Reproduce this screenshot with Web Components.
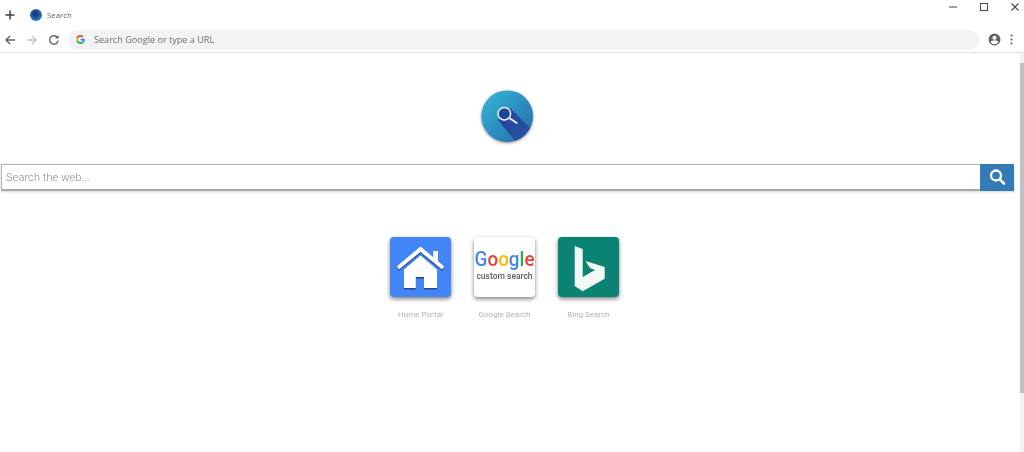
<!DOCTYPE html>
<html><head><meta charset="utf-8"><style>
html,body{margin:0;height:100%;background:#fff;overflow:hidden}
body{width:1024px;height:452px;font-family:"Open Sans","Liberation Sans",sans-serif}
</style></head><body>
<browser-frame>
<tool-bar></tool-bar>
<page-view>
<search-logo></search-logo>
<search-box></search-box>
<tile-row>
<app-tile label="Home Portal" kind="home"></app-tile>
<app-tile label="Google Search" kind="google"></app-tile>
<app-tile label="Bing Search" kind="bing"></app-tile>
</tile-row>
</page-view>
</browser-frame>
<script>
function def(name, html){
  customElements.define(name, class extends HTMLElement{
    constructor(){super();this.attachShadow({mode:'open'}).innerHTML=typeof html==='function'?html(this):html;}
  });
}
def('browser-frame',`<style>:host{display:flex;flex-direction:column;width:1024px;height:452px;background:#fff;filter:blur(.35px)}</style><slot></slot>`);
def('tool-bar',`<style>
:host{display:block;height:53px;box-sizing:border-box;border-bottom:1px solid #dfe1e3;font-family:"Open Sans","Liberation Sans",sans-serif;position:relative}
.tabs{display:flex;align-items:center;height:29px;padding-left:4px}
.tabs svg.plus{width:12px;height:12px}
.fav{width:12px;height:12px;border-radius:50%;margin-left:14px;background:radial-gradient(circle at 45% 42%,#1d3f86 0 22%,#2b74bf 62%,#57a8dc)}
.title{font-size:7.8px;color:#5f6368;margin-left:5px}
.win{display:flex;position:absolute;top:0;right:0}
.win svg{display:block}
.nav{display:flex;align-items:center;height:21px}
.ic{display:block}
.omni{margin-left:8px;width:911px;height:20px;border-radius:10px;background:#f1f3f4;display:flex;align-items:center;box-sizing:border-box;padding-left:8px}
.omni span{font-size:9.1px;color:#6a6d71;margin-left:9px}
</style>
<div class="tabs"><svg class="plus" viewBox="0 0 12 12"><path d="M6 1.5v9M1.5 6h9" stroke="#3c4043" stroke-width="1.5"/></svg><div class="fav"></div><div class="title">Search</div></div>
<div class="win"><svg width="114" height="14" viewBox="0 0 114 14"><path d="M39 7h8" stroke="#5f6368" stroke-width="1.2"/><rect x="70.5" y="3.5" width="7" height="7" fill="none" stroke="#4a4a4a" stroke-width="1.1"/><path d="M101.500 3.500l7 7M108.500 3.500l-7 7" stroke="#4a4a4a" stroke-width="1.1"/></svg></div>
<div class="nav">
<svg class="ic" style="margin-left:4px" width="12" height="12" viewBox="0 0 12 12"><path d="M11 6H2M6 2L2 6l4 4" fill="none" stroke="#5f6368" stroke-width="1.4"/></svg>
<svg class="ic" style="margin-left:10px" width="12" height="12" viewBox="0 0 12 12"><path d="M1 6h9M6 2l4 4-4 4" fill="none" stroke="#c2c4c6" stroke-width="1.4"/></svg>
<svg class="ic" style="margin-left:10px" width="12" height="12" viewBox="0 0 12 12"><path d="M10 6.5A4.2 4.2 0 1 1 8.8 3" fill="none" stroke="#5f6368" stroke-width="1.4"/><path d="M10.6 1v3.6H7z" fill="#5f6368"/></svg>
<div class="omni"><svg width="9" height="9" viewBox="0 0 48 48"><path fill="#EA4335" d="M24 9.5c3.5 0 6.700 1.200 9.200 3.600l6.900-6.900C35.900 2.400 30.400 0 24 0 14.600 0 6.500 5.400 2.600 13.200l8 6.200C12.400 13.700 17.700 9.500 24 9.500z"/><path fill="#4285F4" d="M46.900 24.500c0-1.600-.1-3.100-.4-4.500H24v9h12.900c-.6 3-2.200 5.500-4.800 7.200l7.700 6c4.500-4.200 7.100-10.300 7.100-17.700z"/><path fill="#FBBC05" d="M10.500 28.600c-.5-1.400-.8-3-.8-4.600s.3-3.200.8-4.600l-8-6.200C.9 16.500 0 20.100 0 24s.9 7.500 2.600 10.800l7.900-6.200z"/><path fill="#34A853" d="M24 48c6.500 0 11.900-2.100 15.900-5.800l-7.700-6c-2.200 1.400-4.900 2.300-8.200 2.300-6.300 0-11.600-4.200-13.500-9.900l-8 6.200C6.500 42.600 14.600 48 24 48z"/></svg><span>Search Google or type a URL</span></div>
<svg class="ic" style="margin-left:9px" width="13" height="13" viewBox="0 0 24 24"><path fill="#5f6368" d="M12 1a11 11 0 1 0 0 22 11 11 0 0 0 0-22zm0 4a3.800 3.800 0 1 1 0 7.600A3.800 3.800 0 0 1 12 5zm0 15.500c-2.900 0-5.400-1.400-7-3.600.1-2.300 4.700-3.600 7-3.600s6.900 1.300 7 3.600c-1.600 2.200-4.100 3.600-7 3.600z"/></svg>
<svg class="ic" style="margin-left:9px" width="3" height="11" viewBox="0 0 3 11"><circle cx="1.500" cy="1.500" r="1.100" fill="#5f6368"/><circle cx="1.500" cy="5.500" r="1.100" fill="#5f6368"/><circle cx="1.500" cy="9.500" r="1.100" fill="#5f6368"/></svg>
</div>`);
def('page-view',`<style>
:host{display:block;position:relative;height:399px;font-family:"Roboto","Open Sans",sans-serif;box-sizing:border-box;padding-top:37px}
.bar{position:absolute;top:0;right:0;width:4px;height:399px;background:#f1f1f1}
.th{position:absolute;top:10px;left:0;right:0;height:330px;background:#c1c1c1}
</style><slot></slot><div class="bar"><div class="th"></div></div>`);
def('search-logo',`<style>:host{display:block;width:52px;height:52px;margin-left:481px;position:relative}
svg{display:block;filter:drop-shadow(0 1px 1.500px rgba(0,0,0,.45))}</style>
<svg width="52" height="52" viewBox="0 0 52 52"><defs>
<linearGradient id="g" x1="0" y1="0" x2="1" y2="1"><stop offset="0" stop-color="#35b8d6"/><stop offset=".55" stop-color="#2a8cc0"/><stop offset="1" stop-color="#2a6aa8"/></linearGradient>
<linearGradient id="b" x1="0" y1="0" x2="1" y2="1"><stop offset="0" stop-color="#1f3f98"/><stop offset="1" stop-color="#2b58a6"/></linearGradient>
<clipPath id="c"><circle cx="26.200" cy="26.200" r="25.800"/></clipPath></defs>
<circle cx="26.200" cy="26.200" r="25.800" fill="url(#g)"/>
<path clip-path="url(#c)" d="M29 18L52 41 38 56 17 30z" fill="url(#b)"/>
<circle cx="23.300" cy="23.700" r="6.300" fill="#1f4596" stroke="#eef4fa" stroke-width="1.500"/>
<path d="M28.300 28l7.400 5" stroke="#eef4fa" stroke-width="1.800" stroke-linecap="round"/></svg>`);
def('search-box',`<style>
:host{display:flex;margin:22px 10px 0 1px;height:27px;box-sizing:border-box;filter:drop-shadow(0 1px 1px rgba(0,0,0,.18))}
.in{flex:1;box-sizing:border-box;border:1.500px solid #b4b4b4;border-right:0;border-bottom:2px solid #a8a8a8;background:#fff;display:flex;align-items:center;padding-left:4px;font-size:11px;font-weight:300;color:#8a8a8a;letter-spacing:.1px}
.btn{width:34px;background:#337ab7;display:flex;align-items:center;justify-content:center}
</style><div class="in">Search the web...</div><div class="btn"><svg width="17" height="17" viewBox="0 0 17 17"><circle cx="7" cy="6.500" r="5" fill="none" stroke="#fff" stroke-width="2.300"/><path d="M10.800 10.300l4.200 4.200" stroke="#fff" stroke-width="2.600" stroke-linecap="round"/></svg></div>`);
def('tile-row',`<style>:host{display:flex;gap:23px;margin:46px 0 0 390px}</style><slot></slot>`);
const icons={
home:`<div class="t" style="background:#4285f4"><svg width="61" height="60" viewBox="0 0 61 60"><g fill="#fff" filter="url(#s)"><path d="M43.300 14H48v13l-4.700-3.800z"/><path d="M7 29.200L30.500 9.500 54 29.200l-2 3L30.500 14.800 9 32.200z"/><path d="M14 32.500L30.500 18.500 47 32.500V51H34V40h-8.300v11H14z"/></g><defs><filter id="s" x="-10%" y="-10%" width="120%" height="125%"><feDropShadow dx="0" dy="1.500" stdDeviation=".5" flood-color="#1c3f85" flood-opacity=".9"/></filter></defs></svg></div>`,
google:`<div class="t g" style="background:#fff"><div class="w"><span style="color:#4285f4">G</span><span style="color:#ea4335">o</span><span style="color:#fbbc05">o</span><span style="color:#4285f4">g</span><span style="color:#34a853">l</span><span style="color:#ea4335">e</span></div><div class="c">custom search</div></div>`,
bing:`<div class="t" style="background:#0a8372"><svg width="61" height="60" viewBox="0 0 61 60"><path fill="#f2f8f6" d="M16.700 9l8 3v28l12.300-7-5-2-4.500-7 19.200 6v11.700L24.700 54.300l-8-5.300z"/></svg></div>`};
def('app-tile',el=>`<style>
:host{display:flex;flex-direction:column;align-items:center;width:61px;font-family:"Roboto","Open Sans",sans-serif}
.t{width:61px;height:60px;border-radius:4px;box-shadow:0 2px 4px rgba(0,0,0,.5);overflow:hidden}
svg{display:block}
.g{display:flex;flex-direction:column;align-items:center;justify-content:flex-start;padding-top:11px;box-sizing:border-box}
.w{font-size:20.500px;line-height:23px;font-weight:500;transform:scaleX(.92);white-space:nowrap}
.c{font-size:8.500px;line-height:10px;color:#5c5c5c;font-weight:500;white-space:nowrap}
.l{font-size:8px;line-height:10px;color:#b3b3b3;margin-top:13px;white-space:nowrap;font-weight:400}
</style>${icons[el.getAttribute('kind')]}<div class="l">${el.getAttribute('label')}</div>`);
</script>
</body></html>
